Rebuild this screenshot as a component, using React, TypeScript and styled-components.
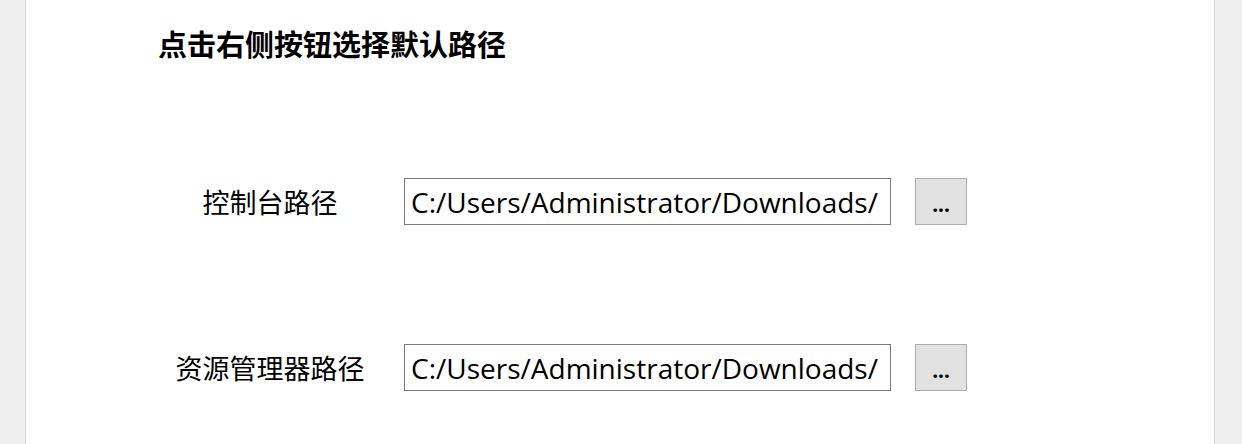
import React from 'react'
import styled, { createGlobalStyle } from 'styled-components'

const GlobalStyle = createGlobalStyle`
  html, body {
    margin: 0;
    padding: 0;
    background: #efefef;
    font-family: "Noto Sans CJK SC", "Noto Sans", sans-serif;
    overflow: hidden;
  }
`

const Page = styled.div`
  width: 1242px;
  height: 444px;
  display: flex;
  background: #efefef;
`

const Panel = styled.div`
  margin-left: 25px;
  width: 1190px;
  height: 444px;
  box-sizing: border-box;
  background: #ffffff;
  border-left: 1px solid #d6d6d6;
  border-right: 1px solid #d6d6d6;
  padding: 22px 0 0 132px;
`

const Title = styled.h1`
  margin: 0;
  font-size: 29px;
  line-height: 42px;
  font-weight: 700;
  color: #000;
`

const Rows = styled.div`
  margin-top: 114px;
  display: flex;
  flex-direction: column;
  gap: 119px;
`

const Row = styled.div`
  display: flex;
  align-items: center;
  height: 47px;
`

const Label = styled.div`
  width: 224px;
  margin-right: 22px;
  text-align: center;
  font-size: 27px;
  color: #000;
`

const PathInput = styled.input`
  width: 487px;
  height: 47px;
  box-sizing: border-box;
  border: 1px solid #7a7a7a;
  padding: 0 0 0 6px;
  font-family: "Open Sans", "Noto Sans CJK SC", sans-serif;
  font-size: 28px;
  color: #000;
  background: #fff;
  outline: none;
`

const BrowseButton = styled.button`
  margin-left: 24px;
  width: 52px;
  height: 47px;
  box-sizing: border-box;
  border: 1px solid #adadad;
  background: #e1e1e1;
  font-family: "Noto Sans", sans-serif;
  font-size: 21px;
  font-weight: 700;
  color: #000;
  padding: 4px 0 0;
`

const rows = ['控制台路径', '资源管理器路径']

export default function App() {
  return (
    <>
      <GlobalStyle />
      <Page>
        <Panel>
          <Title>点击右侧按钮选择默认路径</Title>
          <Rows>
            {rows.map((label) => (
              <Row key={label}>
                <Label>{label}</Label>
                <PathInput readOnly value="C:/Users/Administrator/Downloads/" />
                <BrowseButton>...</BrowseButton>
              </Row>
            ))}
          </Rows>
        </Panel>
      </Page>
    </>
  )
}
